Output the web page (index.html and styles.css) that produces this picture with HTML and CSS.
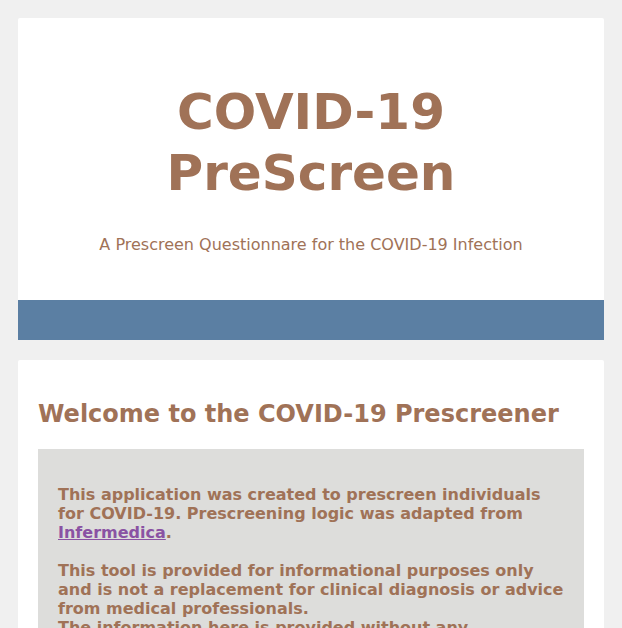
FILE: index.html
```html
<!DOCTYPE html>
<html lang="en">
<head>
<meta charset="utf-8">
<title>COVID-19 PreScreen</title>
<link rel="stylesheet" href="styles.css">
</head>
<body>
  <header class="masthead">
    <div class="masthead-inner">
      <h1 class="title">COVID-19 PreScreen</h1>
      <p class="subtitle">A Prescreen Questionnare for the COVID-19 Infection</p>
    </div>
    <nav class="navbar"></nav>
  </header>
  <main class="card">
    <h2 class="welcome">Welcome to the COVID-19 Prescreener</h2>
    <div class="notice">
      <p class="notice-text">This application was created to prescreen individuals for COVID-19. Prescreening logic was adapted from <a class="link" href="#">Infermedica</a>.<br><br>This tool is provided for informational purposes only and is not a replacement for clinical diagnosis or advice from medical professionals.<br>The information here is provided without any representations or warranties of any kind, express or implied. If you feel unwell, please contact your doctor or local health authority.</p>
    </div>
  </main>
</body>
</html>
```
FILE: styles.css
```css
html, body {
  margin: 0;
  padding: 0;
}
body {
  background: #f0f0f0;
  padding: 18px;
  font-family: "DejaVu Sans", "Liberation Sans", sans-serif;
  color: #a07257;
}
.masthead {
  background: #ffffff;
  border-radius: 2px 2px 0 0;
  overflow: hidden;
}
.masthead-inner {
  padding: 32px 20px 30px;
  text-align: center;
}
.title {
  margin: 32px 0 31px;
  font-size: 50px;
  line-height: 61px;
  font-weight: bold;
  color: #a07257;
}
.subtitle {
  margin: 16px 0;
  font-size: 16px;
  color: #a07257;
}
.navbar {
  height: 40px;
  background: #5b7fa3;
}
.card {
  display: block;
  margin-top: 20px;
  background: #ffffff;
  padding: 20px;
  border-radius: 2px;
}
.welcome {
  margin: 20px 0 21px;
  font-size: 24px;
  font-weight: bold;
  color: #a07257;
}
.notice {
  background: #dddddb;
  padding: 20px;
}
.notice-text {
  margin: 16px 0;
  font-size: 16px;
  font-weight: bold;
  color: #a07257;
}
.link {
  color: #8a52a3;
  text-decoration: underline;
}
```
